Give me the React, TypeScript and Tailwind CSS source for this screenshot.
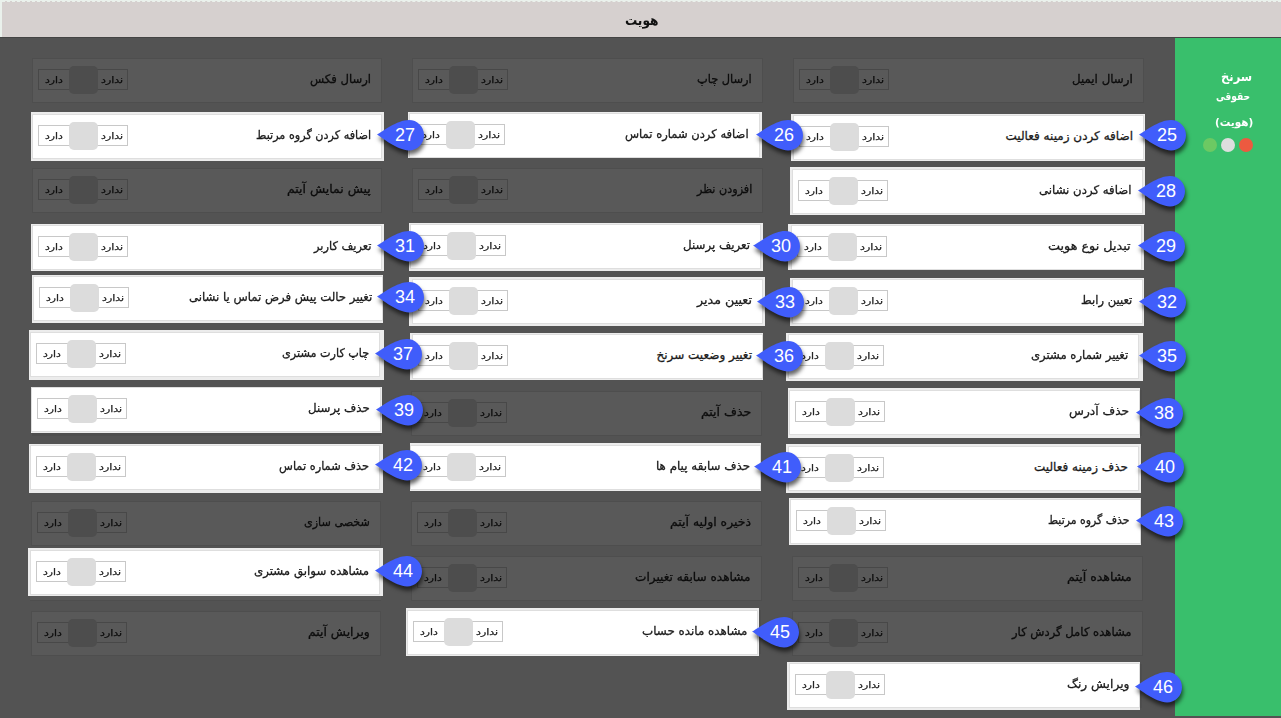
import { useLayoutEffect, useRef } from "react";

type Item = { text: string; width: number; box: string; pin?: string; n?: number };

const right: Item[] = [
  { text: "ارسال ایمیل", width: 61, box: "mt-[21px] ml-[13px]" },
  { text: "اضافه کردن زمینه فعالیت", width: 127, n: 25, box: "mt-[11px] ml-[11px] w-[354px] h-[47px] pt-px pl-0.5", pin: "left-[348px] top-[6px]" },
  { text: "اضافه کردن نشانی", width: 93, n: 28, box: "mt-[6px] ml-[10px] w-[355px] h-[48px] pt-0.5 pl-0.5", pin: "left-[348px] top-[9px]" },
  { text: "تبدیل نوع هویت", width: 83, n: 29, box: "mt-[9px] ml-[8px] w-[356px] h-[46px] pt-px pl-[3px]", pin: "left-[350px] top-[7px]" },
  { text: "تعیین رابط", width: 51, n: 32, box: "mt-[8px] ml-[10px] w-[354px] h-[48px] pt-px pl-0.5", pin: "left-[349px] top-[9px]" },
  { text: "تغییر شماره مشتری", width: 97, n: 35, box: "mt-[7px] ml-[6px] w-[357px] h-[48px] pt-px pl-0.5", pin: "left-[353px] top-[8px]" },
  { text: "حذف آدرس", width: 60, n: 38, box: "mt-[7px] ml-[8px] w-[352px] h-[50px] pt-0.5 pl-px shadow-[4px_0_0_-2px_#4e4e4e]", pin: "left-[348px] top-[10px]" },
  { text: "حذف زمینه فعالیت", width: 94, n: 40, box: "mt-[6px] ml-[6px] w-[355px] h-[49px] pt-0.5 pl-0.5 shadow-[3px_0_0_-2px_#4e4e4e]", pin: "left-[351px] top-[8px]" },
  { text: "حذف گروه مرتبط", width: 82, n: 43, box: "mt-[5px] ml-[9px] w-[352px] h-[47px] pt-px pl-px shadow-[3px_0_0_-2px_#4e4e4e]", pin: "left-[347px] top-[8px]" },
  { text: "مشاهده آیتم", width: 65, box: "mt-[11px] ml-[12px]" },
  { text: "مشاهده کامل گردش کار", width: 120, box: "mt-[10px] ml-[12px]" },
  { text: "ویرایش رنگ", width: 62, n: 46, box: "mt-[6px] ml-[7px] w-[353px] h-[48px] pt-px pl-0.5 shadow-[4px_0_0_-2px_#4e4e4e]", pin: "left-[348px] top-[10px]" },
];

const middle: Item[] = [
  { text: "ارسال چاپ", width: 55, box: "mt-[21px] ml-[12px]" },
  { text: "اضافه کردن شماره تماس", width: 124, n: 26, box: "mt-[9px] ml-[8px] w-[354px] h-[46px] pt-px pl-px", pin: "left-[348px] top-[8px]" },
  { text: "افزودن نظر", width: 55, box: "mt-[10px] ml-[12px]" },
  { text: "تعریف پرسنل", width: 67, n: 30, box: "mt-[10px] ml-[9px] w-[354px] h-[48px] pt-px pl-px", pin: "left-[344px] top-[8px]" },
  { text: "تعیین مدیر", width: 55, n: 33, box: "mt-[6px] ml-[9px] w-[356px] h-[49px] pt-0.5 pl-[3px]", pin: "left-[348px] top-[10px]" },
  { text: "تغییر وضعیت سرنخ", width: 96, n: 36, box: "mt-[7px] ml-[10px] w-[353px] h-[47px] pt-px pl-0.5", pin: "left-[346px] top-[8px]" },
  { text: "حذف آیتم", width: 50, box: "mt-[11px] ml-[11px]" },
  { text: "حذف سابقه پیام ها", width: 94, n: 41, box: "mt-[7px] ml-[10px] w-[351px] h-[48px] pt-0.5", pin: "left-[344px] top-[9px]" },
  { text: "ذخیره اولیه آیتم", width: 81, box: "mt-[10px] ml-[11px]" },
  { text: "مشاهده سابقه تغییرات", width: 116, box: "mt-[10px] ml-[11px]" },
  { text: "مشاهده مانده حساب", width: 105, n: 45, box: "mt-[7px] ml-[6px] w-[353px] h-[48px] pt-0.5 pl-px shadow-[4px_0_0_-2px_#4e4e4e]", pin: "left-[346px] top-[9px]" },
];

const left: Item[] = [
  { text: "ارسال فکس", width: 61, box: "mt-[21px] ml-[32px]" },
  { text: "اضافه کردن گروه مرتبط", width: 115, n: 27, box: "mt-[9px] ml-[31px] w-[353px] h-[49px] pt-0.5 pl-px", pin: "left-[346px] top-[8px]" },
  { text: "پیش نمایش آیتم", width: 84, box: "mt-[7px] ml-[32px]" },
  { text: "تعریف کاربر", width: 57, n: 31, box: "mt-[11px] ml-[31px] w-[353px] h-[47px] pt-px pl-px", pin: "left-[346px] top-[7px]" },
  { text: "تغییر حالت پیش فرض تماس یا نشانی", width: 183, n: 34, box: "mt-[4px] ml-[32px] w-[351px] h-[48px] pt-px pl-px", pin: "left-[345px] top-[7px]" },
  { text: "چاپ کارت مشتری", width: 87, n: 37, box: "mt-[7px] ml-[29px] w-[355px] h-[50px] pt-0.5 pl-px", pin: "left-[346px] top-[9px]" },
  { text: "حذف پرسنل", width: 62, n: 39, box: "mt-[7px] ml-[31px] w-[351px] h-[46px] shadow-[0_4px_0_-1px_#4e4e4e]", pin: "left-[345px] top-[8px]" },
  { text: "حذف شماره تماس", width: 90, n: 42, box: "mt-[11px] ml-[29px] w-[354px] h-[49px] pt-px pl-px", pin: "left-[346px] top-[6px]" },
  { text: "شخصی سازی", width: 66, box: "mt-[8px] ml-[31px]" },
  { text: "مشاهده سوابق مشتری", width: 115, n: 44, box: "mt-[2px] ml-[28px] w-[355px] h-[48px] pt-0.5 pl-0.5 shadow-[0_6px_0_-2px_#595959,0_7px_0_-2px_#4e4e4e]", pin: "left-[347px] top-[8px]" },
  { text: "ویرایش آیتم", width: 62, box: "mt-[15px] ml-[31px]" },
];

/** Persian text set to an exact advance width, anchored at its right edge. */
function FitText({ text, width, className }: { text: string; width: number; className: string }) {
  const ref = useRef<HTMLSpanElement>(null);
  useLayoutEffect(() => {
    const el = ref.current;
    if (el) el.style.transform = `scaleX(${width / el.offsetWidth})`;
  }, [width, text]);
  return (
    <span ref={ref} dir="rtl" className={`inline-block shrink-0 origin-right whitespace-nowrap ${className}`}>
      {text}
    </span>
  );
}

function Pin({ n, place }: { n: number; place: string }) {
  return (
    <div className={`absolute z-10 h-[30px] w-[47px] ${place}`}>
      <svg viewBox="0 0 47 30" className="absolute inset-0 h-full w-full overflow-visible drop-shadow-[1px_4px_2px_rgba(0,0,0,0.6)]">
        <path d="M0 14.6C5 12 20 0 32 0a15 15.2 0 0 1 0 30.4C20 30.4 5 17.5 0 14.6Z" fill="#405dfb" />
      </svg>
      <span className="relative block pl-[9px] text-center font-['Liberation_Sans',sans-serif] text-[18px] leading-[31px] text-white">{n}</span>
    </div>
  );
}

function Toggle({ dim }: { dim: boolean }) {
  const text = dim ? "text-[#0c0c0c]" : "text-[#222]";
  return (
    <div className={`flex h-[21px] w-[90px] items-center border ${dim ? "border-[#484848]" : "border-[#c8c8c8]"}`}>
      <div className="flex w-[30px] justify-end pr-[6px]">
        <FitText text="دارد" width={18} className={`text-[9px] leading-[18px] [-webkit-text-stroke:0.25px] ${text}`} />
      </div>
      <div className={`h-7 w-[29px] shrink-0 rounded-[5px] ${dim ? "bg-[#4d4d4d]" : "bg-[#dcdcdc]"}`} />
      <div className="flex w-[29px] justify-end pr-[4px]">
        <FitText text="ندارد" width={22} className={`text-[9px] leading-[18px] [-webkit-text-stroke:0.25px] ${text}`} />
      </div>
    </div>
  );
}

function Card({ item, panel }: { item: Item; panel: string }) {
  const dim = item.n === undefined;
  return (
    <div className={`relative shrink-0 ${dim ? "" : "bg-[#ececec]"} ${item.box}`}>
      <div className={`flex h-[45px] items-start justify-between border pt-2.5 pr-[10px] pl-[5px] ${panel} ${dim ? "border-[#4e4e4e] bg-[#595959]" : "border-[#dedede] bg-white"}`}>
        <Toggle dim={dim} />
        <FitText text={item.text} width={item.width} className={`text-[12px] leading-5 [-webkit-text-stroke:0.3px] ${dim ? "text-[#0c0c0c]" : "text-[#1b1b1b]"}`} />
      </div>
      {item.n !== undefined && <Pin n={item.n} place={item.pin ?? ""} />}
    </div>
  );
}

function Column({ items, className, panel }: { items: Item[]; className: string; panel: string }) {
  return (
    <div className={`flex shrink-0 flex-col items-start ${className}`}>
      {items.map((item) => (
        <Card key={item.text} item={item} panel={panel} />
      ))}
    </div>
  );
}

export default function App() {
  return (
    <div className="flex h-[718px] w-[1281px] flex-col overflow-hidden bg-[#535353] font-['DejaVu_Sans',sans-serif]">
      <header className="flex h-[37px] shrink-0 items-center justify-center border-t border-l-2 border-[#eaf1ec] bg-[#d6d0cf]">
        <div className="flex h-full w-full items-center justify-center border-t border-dashed border-[#eaf1ec]">
          <FitText text="هویت" width={34} className="mr-[5px] text-[14px] leading-6 font-bold text-[#111]" />
        </div>
      </header>
      <div className="flex min-h-0 flex-1 border-t border-[#444]">
        <main className="-mt-px flex w-[1175px] shrink-0">
          <Column items={left} className="w-[400px]" panel="w-[350px]" />
          <Column items={middle} className="w-[380px]" panel="w-[351px]" />
          <Column items={right} className="w-[395px]" panel="w-[351px]" />
        </main>
        <aside className="mb-0.5 flex flex-1 flex-col items-end bg-[#39bf6c] pt-[28px] pr-[28px] text-white">
          <FitText text="سرنخ" width={31} className="mr-[1px] text-[13px] leading-[21px] font-bold" />
          <FitText text="حقوقی" width={34} className="mr-[3px] text-[11px] leading-5 font-bold" />
          <FitText text="(هویت)" width={38} className="mt-[6px] text-[11px] leading-5 font-bold" />
          <div className="mt-[5px] flex gap-1">
            <i className="size-3.5 rounded-full bg-[#6cc963]" />
            <i className="size-3.5 rounded-full bg-[#dedede]" />
            <i className="size-3.5 rounded-full bg-[#ec5a40]" />
          </div>
        </aside>
      </div>
    </div>
  );
}
